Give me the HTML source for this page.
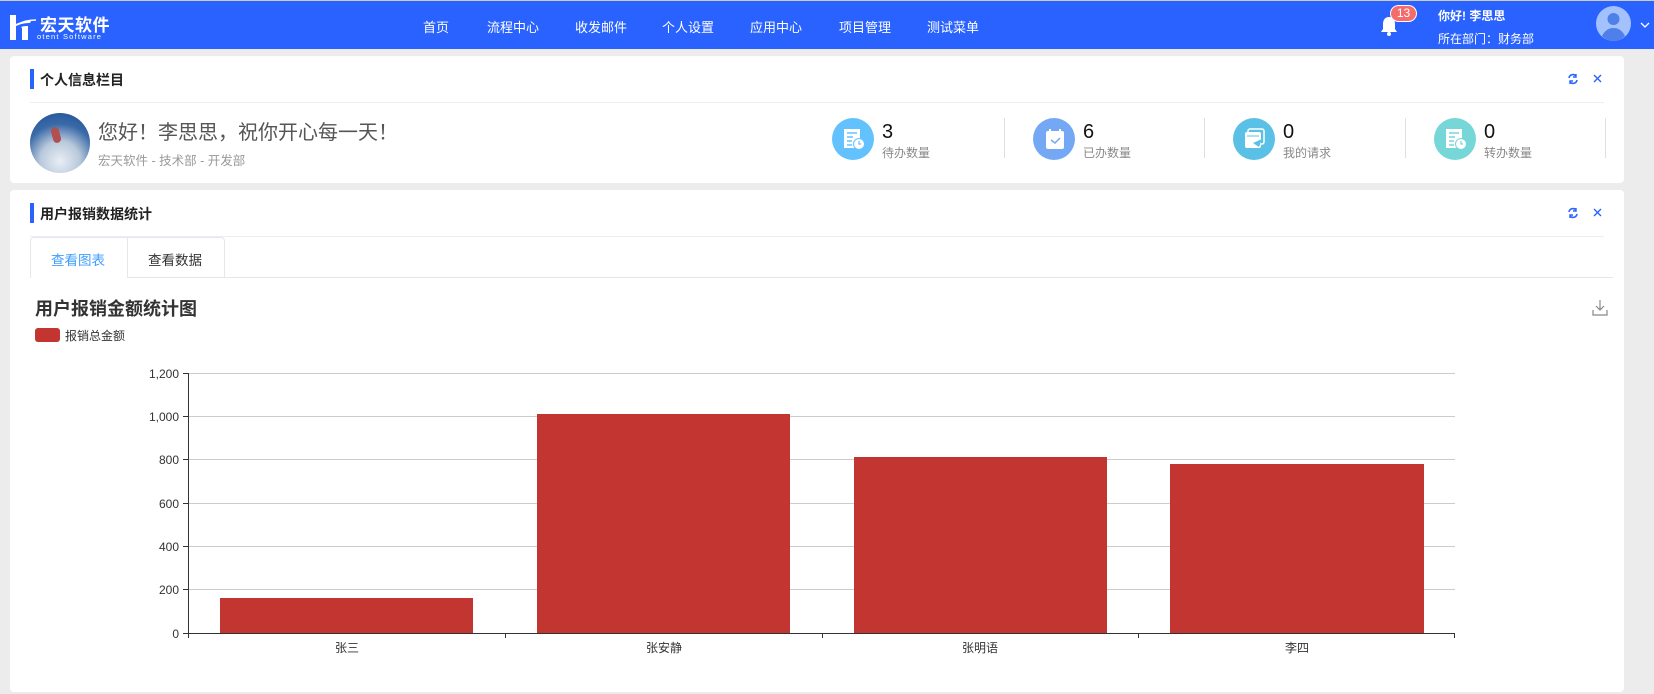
<!DOCTYPE html>
<html><head><meta charset="utf-8"><style>
*{margin:0;padding:0;box-sizing:border-box}
body{width:1654px;height:694px;overflow:hidden;background:#ececec;font-family:"Liberation Sans","Noto Sans CJK SC",sans-serif;position:relative}
.abs{position:absolute}
.hdr{left:0;top:1px;width:1654px;height:48px;background:#2962ff}
.nav{top:17px;color:#fff;font-size:13px;white-space:nowrap}
.card{background:#fff;border-radius:4px;left:10px;width:1614px}
.ttl{font-size:14px;font-weight:bold;color:#222}
.bar{width:4px;height:20px;background:#2962ff}
.hl{height:1px;background:#ebeef5}
.ic{width:42px;height:42px;border-radius:50%}
.num{font-size:20px;color:#111}
.lbl{font-size:12px;color:#888}
.vd{width:1px;height:40px;background:#dcdfe6}
</style></head><body>
<div class="abs" style="left:0;top:0;width:1654px;height:1px;background:#ccc"></div>
<div class="abs hdr"></div>
<svg class="abs" style="left:9px;top:14px" width="28" height="27" viewBox="0 0 28 27"><path d="M1 1h6v9c4-2 9-3 15-3l-1 2c-5 0-10 1-14 3v14H1z M12 13c3-1 5-1 7-1v14h-6V14z" fill="#fff"/><path d="M8 11c6-4 13-5 19-5" stroke="#fff" stroke-width="1.5" fill="none"/></svg>
<div class="abs" style="left:40px;top:11px;color:#fff;font-size:17px;font-weight:bold;letter-spacing:0.5px">宏天软件</div>
<div class="abs" style="left:37px;top:32px;color:#fff;font-size:7.5px;letter-spacing:1.2px">otent Software</div>
<div class="abs nav" style="left:423px">首页</div>
<div class="abs nav" style="left:487px">流程中心</div>
<div class="abs nav" style="left:575px">收发邮件</div>
<div class="abs nav" style="left:662px">个人设置</div>
<div class="abs nav" style="left:750px">应用中心</div>
<div class="abs nav" style="left:839px">项目管理</div>
<div class="abs nav" style="left:927px">测试菜单</div>
<svg class="abs" style="left:1380px;top:16px" width="18" height="20" viewBox="0 0 18 20"><path d="M9 1c-4 0-6 3-6 7v5l-2 3h16l-2-3V8c0-4-2-7-6-7z" fill="#fff"/><circle cx="9" cy="18" r="2" fill="#fff"/></svg>
<div class="abs" style="left:1390px;top:5px;width:27px;height:17px;border-radius:9px;background:#f56c6c;border:1px solid #fff;color:#fff;font-size:12px;text-align:center;line-height:15px">13</div>
<div class="abs" style="left:1438px;top:7px;color:#fff;font-size:12px;font-weight:bold">你好! 李思思</div>
<div class="abs" style="left:1438px;top:30px;color:#fff;font-size:12px">所在部门：财务部</div>
<svg class="abs" style="left:1596px;top:6px" width="35" height="35" viewBox="0 0 35 35"><circle cx="17.5" cy="17.5" r="17.5" fill="#a3c2fd"/><circle cx="17.5" cy="13" r="6" fill="#4f7fe8"/><path d="M6 30c3-6 7-8 11.5-8s8.5 2 11.5 8c-3 3-7 5-11.5 5S9 33 6 30z" fill="#4f7fe8"/></svg>
<svg class="abs" style="left:1640px;top:22px" width="10" height="7"><path d="M1 1l4 4 4-4" stroke="#fff" stroke-width="1.3" fill="none"/></svg>

<div class="abs card" style="top:56px;height:127px"></div>
<div class="abs bar" style="left:30px;top:69px"></div>
<div class="abs ttl" style="left:40px;top:70px">个人信息栏目</div>
<div class="abs hl" style="left:30px;top:102px;width:1574px"></div>
<svg class="abs" style="left:1567px;top:73px" width="12" height="12" viewBox="0 0 12 12"><path d="M2 5a4 4 0 0 1 7-2M10 7a4 4 0 0 1-7 2" stroke="#2962ff" stroke-width="1.6" fill="none"/><path d="M9 1v3H6M3 11V8h3" stroke="#2962ff" stroke-width="1.4" fill="none"/></svg>
<svg class="abs" style="left:1592px;top:73px" width="11" height="11"><path d="M2 2l7 7M9 2l-7 7" stroke="#2962ff" stroke-width="1.4"/></svg>
<div class="abs" style="left:30px;top:113px;width:60px;height:60px;border-radius:50%;background:radial-gradient(circle at 50% 80%,#e8eef5 0%,#b9c9db 35%,#3a6aa8 65%,#1b4e93 100%)"></div>
<div class="abs" style="left:52px;top:127px;width:8px;height:16px;background:#b05050;border-radius:4px;transform:rotate(-15deg)"></div>
<div class="abs" style="left:98px;top:116px;font-size:20px;color:#555">您好！李思思，祝你开心每一天！</div>
<div class="abs" style="left:98px;top:150px;font-size:12.5px;color:#999">宏天软件 - 技术部 - 开发部</div>

<div class="abs ic" style="left:832px;top:118px;background:#63c2fd"></div>
<div class="abs ic" style="left:1033px;top:118px;background:#74a8f5"></div>
<div class="abs ic" style="left:1233px;top:118px;background:#5bc0e6"></div>
<div class="abs ic" style="left:1434px;top:118px;background:#77d6d8"></div>
<svg class="abs" style="left:843px;top:128px" width="22" height="22"><rect x="1" y="1" width="16" height="19" fill="#fff"/><path d="M4 5h10M4 9h6M4 13h5M4 17h5" stroke="#63c2fd" stroke-width="1.5"/><circle cx="16" cy="16" r="5.5" fill="#fff" stroke="#63c2fd"/><path d="M16 13v3h2" stroke="#63c2fd" stroke-width="1.2" fill="none"/></svg>
<svg class="abs" style="left:1044px;top:127px" width="22" height="24"><rect x="2" y="4" width="18" height="18" rx="2" fill="#fff"/><path d="M6 2v4M16 2v4" stroke="#fff" stroke-width="2"/><path d="M7 13l4 3 5-5" stroke="#74a8f5" stroke-width="1.5" fill="none"/></svg>
<svg class="abs" style="left:1244px;top:128px" width="22" height="22"><rect x="4" y="1" width="16" height="15" rx="2" fill="none" stroke="#fff" stroke-width="1.5"/><rect x="1" y="4" width="16" height="16" rx="2" fill="#fff"/><path d="M3 8h12" stroke="#5bc0e6"/><path d="M9 15l9-4-3 8z" fill="#5bc0e6"/></svg>
<svg class="abs" style="left:1445px;top:128px" width="22" height="22"><rect x="1" y="1" width="16" height="19" fill="#fff"/><path d="M4 5h10M4 9h6M4 13h5M4 17h5" stroke="#77d6d8" stroke-width="1.5"/><circle cx="16" cy="16" r="5.5" fill="#fff" stroke="#77d6d8"/><path d="M16 13v3h2" stroke="#77d6d8" stroke-width="1.2" fill="none"/></svg>
<div class="abs num" style="left:882px;top:121px">3</div><div class="abs lbl" style="left:882px;top:144px">待办数量</div>
<div class="abs num" style="left:1083px;top:121px">6</div><div class="abs lbl" style="left:1083px;top:144px">已办数量</div>
<div class="abs num" style="left:1283px;top:121px">0</div><div class="abs lbl" style="left:1283px;top:144px">我的请求</div>
<div class="abs num" style="left:1484px;top:121px">0</div><div class="abs lbl" style="left:1484px;top:144px">转办数量</div>
<div class="abs vd" style="left:1004px;top:118px"></div>
<div class="abs vd" style="left:1204px;top:118px"></div>
<div class="abs vd" style="left:1405px;top:118px"></div>
<div class="abs vd" style="left:1605px;top:118px"></div>

<div class="abs card" style="top:190px;height:502px"></div>
<div class="abs bar" style="left:30px;top:203px"></div>
<div class="abs ttl" style="left:40px;top:204px">用户报销数据统计</div>
<svg class="abs" style="left:1567px;top:207px" width="12" height="12" viewBox="0 0 12 12"><path d="M2 5a4 4 0 0 1 7-2M10 7a4 4 0 0 1-7 2" stroke="#2962ff" stroke-width="1.6" fill="none"/><path d="M9 1v3H6M3 11V8h3" stroke="#2962ff" stroke-width="1.4" fill="none"/></svg>
<svg class="abs" style="left:1592px;top:207px" width="11" height="11"><path d="M2 2l7 7M9 2l-7 7" stroke="#2962ff" stroke-width="1.4"/></svg>
<div class="abs hl" style="left:30px;top:236px;width:1574px"></div>
<div class="abs" style="left:30px;top:277px;width:1583px;height:1px;background:#e4e7ed"></div>
<div class="abs" style="left:30px;top:237px;width:195px;height:41px;border:1px solid #e4e7ed;border-bottom:none;border-radius:4px 4px 0 0;background:#fff"></div>
<div class="abs" style="left:127px;top:237px;width:1px;height:40px;background:#e4e7ed"></div>
<div class="abs" style="left:127px;top:277px;width:97px;height:1px;background:#e4e7ed"></div>
<div class="abs" style="left:51px;top:249px;font-size:13.5px;color:#409eff">查看图表</div>
<div class="abs" style="left:148px;top:249px;font-size:13.5px;color:#333">查看数据</div>
<div class="abs" style="left:35px;top:295px;font-size:18px;font-weight:bold;color:#333">用户报销金额统计图</div>
<div class="abs" style="left:35px;top:328px;width:25px;height:14px;border-radius:3px;background:#c23531"></div>
<div class="abs" style="left:65px;top:327px;font-size:12px;color:#333">报销总金额</div>
<svg class="abs" style="left:1592px;top:299px" width="16" height="17"><path d="M8 1v10M4 7l4 4 4-4M1 11v5h14v-5" stroke="#888" stroke-width="1.2" fill="none"/></svg>

<svg class="abs" style="left:0;top:0" width="1654" height="694">
<g stroke="#ccc" stroke-width="1">
<line x1="188" x2="1455" y1="373.5" y2="373.5"/><line x1="188" x2="1455" y1="416.5" y2="416.5"/><line x1="188" x2="1455" y1="459.5" y2="459.5"/><line x1="188" x2="1455" y1="503.5" y2="503.5"/><line x1="188" x2="1455" y1="546.5" y2="546.5"/><line x1="188" x2="1455" y1="589.5" y2="589.5"/>
</g>
<g fill="#c23531">
<rect x="220" y="598" width="253" height="35"/>
<rect x="537" y="414" width="253" height="219"/>
<rect x="854" y="457" width="253" height="176"/>
<rect x="1170" y="464" width="254" height="169"/>
</g>
<g stroke="#333" stroke-width="1">
<line x1="188.5" y1="373" x2="188.5" y2="638"/><line x1="188" y1="633.5" x2="1455" y2="633.5"/>
<line x1="183" x2="188" y1="373.5" y2="373.5"/><line x1="183" x2="188" y1="416.5" y2="416.5"/><line x1="183" x2="188" y1="459.5" y2="459.5"/><line x1="183" x2="188" y1="503.5" y2="503.5"/><line x1="183" x2="188" y1="546.5" y2="546.5"/><line x1="183" x2="188" y1="589.5" y2="589.5"/><line x1="183" x2="188" y1="633.5" y2="633.5"/>
<line x1="505.5" x2="505.5" y1="633" y2="638"/><line x1="822.5" x2="822.5" y1="633" y2="638"/><line x1="1138.5" x2="1138.5" y1="633" y2="638"/><line x1="1454.5" x2="1454.5" y1="633" y2="638"/>
</g>
<g font-family="Liberation Sans, Noto Sans CJK SC, sans-serif" font-size="12" fill="#333" text-anchor="end">
<text x="179" y="378">1,200</text><text x="179" y="421">1,000</text><text x="179" y="464">800</text><text x="179" y="508">600</text><text x="179" y="551">400</text><text x="179" y="594">200</text><text x="179" y="638">0</text>
</g>
<g font-family="Liberation Sans, Noto Sans CJK SC, sans-serif" font-size="12" fill="#333" text-anchor="middle">
<text x="347" y="652">张三</text><text x="664" y="652">张安静</text><text x="980" y="652">张明语</text><text x="1297" y="652">李四</text>
</g>
</svg>
</body></html>
